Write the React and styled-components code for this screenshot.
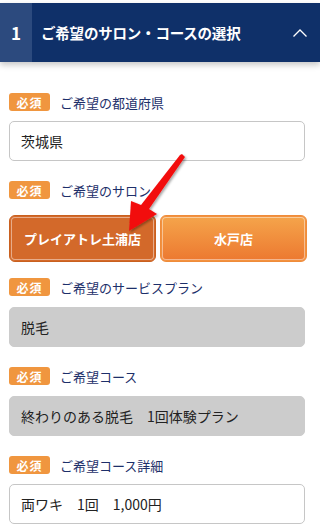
import React from "react";
import styled, { createGlobalStyle } from "styled-components";

const GlobalStyle = createGlobalStyle`
  body {
    margin: 0;
    background: #fff;
    font-family: "Noto Sans CJK JP", "Noto Sans", sans-serif;
  }
`;

const Page = styled.div`
  position: relative;
  width: 320px;
  height: 529px;
  overflow: hidden;
  padding-top: 3px;
  box-sizing: border-box;
`;

const Header = styled.div`
  display: flex;
  height: 59px;
  background: #0f3069;
  color: #fff;
  box-shadow: 0 3px 6px rgba(0, 0, 0, 0.22);
`;

const StepNo = styled.div`
  width: 32px;
  display: flex;
  align-items: center;
  justify-content: center;
  background: #2c4a7e;
  font-size: 17px;
  font-weight: 700;
`;

const Title = styled.div`
  flex: 1;
  display: flex;
  align-items: center;
  padding-left: 9px;
  font-size: 14.5px;
  font-weight: 700;
  letter-spacing: -0.2px;
`;

const Toggle = styled.div`
  width: 40px;
  display: flex;
  align-items: center;
  justify-content: center;
`;

const Body = styled.div`
  padding: 31px 15px 0 9px;
  display: flex;
  flex-direction: column;
`;

const Field = styled.div`
  display: flex;
  flex-direction: column;
  margin-bottom: ${(p) => p.$gap || 20}px;
`;

const LabelRow = styled.div`
  display: flex;
  align-items: center;
  height: 18px;
  margin-bottom: ${(p) => p.$gap || 10}px;
`;

const Badge = styled.span`
  width: 41px;
  height: 18px;
  border-radius: 3px;
  background: #f0963f;
  color: #fff;
  font-size: 12px;
  font-weight: 700;
  display: flex;
  align-items: center;
  justify-content: center;
  letter-spacing: 1px;
`;

const Label = styled.span`
  margin-left: 10px;
  font-size: 13px;
  color: #1d2f6a;
`;

const Box = styled.div`
  height: 40px;
  box-sizing: border-box;
  border-radius: 5px;
  border: 1px solid ${(p) => (p.$disabled ? "#cccccc" : "#c6c6c6")};
  background: ${(p) => (p.$disabled ? "#cccccc" : "#fff")};
  display: flex;
  align-items: center;
  padding-left: 11px;
  font-size: 14px;
  color: #222;
  white-space: pre;
`;

const ButtonRow = styled.div`
  display: flex;
  gap: 4px;
  margin-right: -2px;
`;

const ShopButton = styled.button`
  flex: 1;
  height: 47px;
  border: 1px solid ${(p) => (p.$active ? "#c9601f" : "#ef8c3a")};
  border-radius: 6px;
  background: ${(p) =>
    p.$active ? "#d3692a" : "linear-gradient(#f5a54b, #ec7830)"};
  box-shadow: inset 0 0 0 1px ${(p) => (p.$active ? "#d3692a" : "#f2913f")},
    inset 0 0 0 2px rgba(255, 255, 255, 0.45);
  color: #fff;
  font-family: inherit;
  font-size: 13px;
  font-weight: 700;
  padding: 0;
`;

const Arrow = styled.svg`
  position: absolute;
  left: 0;
  top: 0;
  pointer-events: none;
`;

const App = () => {
  return (
    <Page>
      <GlobalStyle />
      <Header>
        <StepNo>1</StepNo>
        <Title>ご希望のサロン・コースの選択</Title>
        <Toggle>
          <svg width="16" height="10" viewBox="0 0 16 10">
            <path d="M1.5 8.5 L8 2 L14.5 8.5" fill="none" stroke="#fff" strokeWidth="1.3" />
          </svg>
        </Toggle>
      </Header>
      <Body>
        <Field>
          <LabelRow>
            <Badge>必須</Badge>
            <Label>ご希望の都道府県</Label>
          </LabelRow>
          <Box>茨城県</Box>
        </Field>
        <Field $gap={16}>
          <LabelRow $gap={16}>
            <Badge>必須</Badge>
            <Label>ご希望のサロン</Label>
          </LabelRow>
          <ButtonRow>
            <ShopButton $active>プレイアトレ土浦店</ShopButton>
            <ShopButton>水戸店</ShopButton>
          </ButtonRow>
        </Field>
        <Field>
          <LabelRow $gap={11}>
            <Badge>必須</Badge>
            <Label>ご希望のサービスプラン</Label>
          </LabelRow>
          <Box $disabled>脱毛</Box>
        </Field>
        <Field>
          <LabelRow $gap={11}>
            <Badge>必須</Badge>
            <Label>ご希望コース</Label>
          </LabelRow>
          <Box $disabled>終わりのある脱毛　1回体験プラン</Box>
        </Field>
        <Field>
          <LabelRow>
            <Badge>必須</Badge>
            <Label>ご希望コース詳細</Label>
          </LabelRow>
          <Box>両ワキ　1回　1,000円</Box>
        </Field>
      </Body>
      <Arrow width="320" height="529" viewBox="0 0 320 529">
        <defs>
          <filter id="sh" x="-20%" y="-20%" width="140%" height="140%">
            <feDropShadow dx="1.5" dy="1.5" stdDeviation="1.2" floodColor="#000" floodOpacity="0.35" />
          </filter>
        </defs>
        <polygon
          points="182,154 185,157 149,209 157,214 129,231 131,201 141,205 180,155"
          fill="#f20f0f"
          filter="url(#sh)"
        />
      </Arrow>
    </Page>
  );
};

export default App;
